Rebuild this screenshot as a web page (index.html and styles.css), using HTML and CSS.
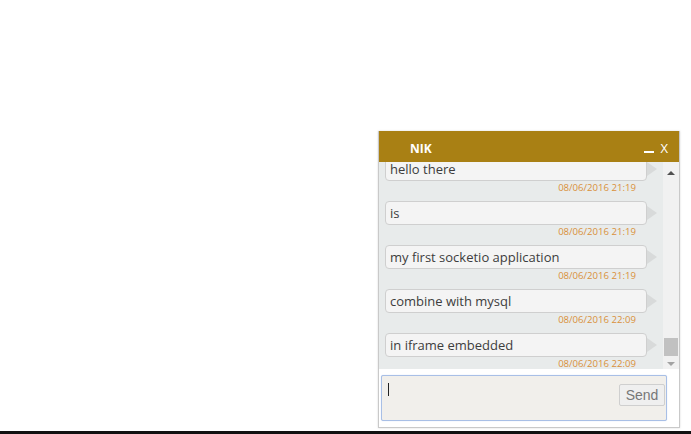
FILE: index.html
```html
<!DOCTYPE html>
<html>
<head>
<meta charset="utf-8">
<link rel="stylesheet" href="styles.css">
</head>
<body>
<div class="stage">
  <div class="chat">
    <div class="chat-head">
      <span class="chat-title">NIK</span>
      <span class="chat-actions"><span class="min"></span><span class="close">X</span></span>
    </div>
    <div class="chat-body">
      <div class="messages">
        <div class="list">
          <div class="msg"><div class="bubble">hello there</div><div class="time">08/06/2016 21:19</div></div>
          <div class="msg"><div class="bubble">is</div><div class="time">08/06/2016 21:19</div></div>
          <div class="msg"><div class="bubble">my first socketio application</div><div class="time">08/06/2016 21:19</div></div>
          <div class="msg"><div class="bubble">combine with mysql</div><div class="time">08/06/2016 22:09</div></div>
          <div class="msg"><div class="bubble">in iframe embedded</div><div class="time">08/06/2016 22:09</div></div>
        </div>
      </div>
      <div class="scrollbar">
        <span class="arr up"></span>
        <span class="track"><span class="thumb"></span></span>
        <span class="arr down"></span>
      </div>
    </div>
    <div class="chat-input">
      <div class="field">
        <span class="caret"></span>
        <button class="send">Send</button>
      </div>
    </div>
  </div>
</div>
<div class="bar"></div>
</body>
</html>
```

FILE: styles.css
```css
html, body {
  margin: 0;
  padding: 0;
  background: #fff;
}
body {
  height: 434px;
  display: flex;
  flex-direction: column;
  justify-content: flex-end;
  overflow: hidden;
}
.stage {
  display: flex;
  padding-left: 378px;
  padding-bottom: 3px;
}
.chat {
  width: 300px;
  border: 1px solid #c9c9c9;
  border-top: none;
  box-shadow: 0 0 2px rgba(0,0,0,0.15);
  display: flex;
  flex-direction: column;
  font-family: "Open Sans", sans-serif;
}
.chat-head {
  height: 31px;
  background: #a98014;
  display: flex;
  align-items: center;
  justify-content: space-between;
  padding: 3px 11px 0 31px;
  box-sizing: border-box;
  color: #fff;
}
.chat-title {
  font-weight: bold;
  font-size: 12px;
}
.chat-actions {
  display: flex;
  align-items: center;
  gap: 6px;
}
.min {
  width: 10px;
  height: 2px;
  background: #fff;
  margin-top: 7px;
}
.close {
  font-size: 13px;
}
.chat-body {
  height: 207px;
  display: flex;
  background: #e8ebeb;
}
.messages {
  flex: 1;
  overflow: hidden;
  padding-left: 6px;
}
.list {
  margin-top: -5px;
}
.msg {
  margin-bottom: 6px;
}
.bubble {
  position: relative;
  width: 262px;
  height: 24px;
  box-sizing: border-box;
  background: #f4f4f4;
  border: 1px solid #cfcfcf;
  border-radius: 4px;
  font-size: 13px;
  line-height: 22px;
  padding-left: 4px;
  color: #3d3d3d;
}
.bubble::after {
  content: "";
  position: absolute;
  right: -11px;
  top: 4px;
  border-left: 10px solid #d8dada;
  border-top: 7px solid transparent;
  border-bottom: 7px solid transparent;
}
.time {
  width: 251px;
  text-align: right;
  font-size: 9.6px;
  line-height: 14px;
  color: #d9903a;
}
.scrollbar {
  width: 16px;
  background: #f1f1f1;
  display: flex;
  flex-direction: column;
  align-items: center;
}
.arr {
  height: 14px;
  display: flex;
  align-items: center;
}
.arr.up::before {
  content: "";
  border-bottom: 4px solid #505050;
  border-left: 4px solid transparent;
  border-right: 4px solid transparent;
  margin-top: 7px;
}
.arr.down {
  height: 10px;
}
.arr.down::before {
  content: "";
  border-top: 4px solid #a3a3a3;
  border-left: 4px solid transparent;
  border-right: 4px solid transparent;
  margin-top: 0;
}
.track {
  flex: 1;
  width: 100%;
  display: flex;
  flex-direction: column;
  justify-content: flex-end;
  padding-bottom: 3px;
}
.thumb {
  display: block;
  margin: 0 1px;
  height: 18px;
  background: #c1c1c1;
}
.chat-input {
  height: 58px;
  background: #fff;
  padding: 6px 12px 6px 2px;
  box-sizing: border-box;
}
.field {
  height: 46px;
  border: 1px solid #a8bfe6;
  border-radius: 2px;
  box-shadow: 0 0 1px #b9cdef;
  background: #f1efeb;
  box-sizing: border-box;
  display: flex;
  justify-content: space-between;
  align-items: flex-start;
  padding: 7px 1px 0 6px;
}
.caret {
  width: 1px;
  height: 13px;
  background: #222;
}
.send {
  margin-top: 1px;
  width: 46px;
  height: 22px;
  font-family: "Liberation Sans", Arial, sans-serif;
  font-size: 14px;
  color: #777;
  background: #efefef;
  border: 1px solid #cfcfcf;
  border-radius: 2px;
  padding: 0;
}
.bar {
  height: 3px;
  background: #111;
}
```
